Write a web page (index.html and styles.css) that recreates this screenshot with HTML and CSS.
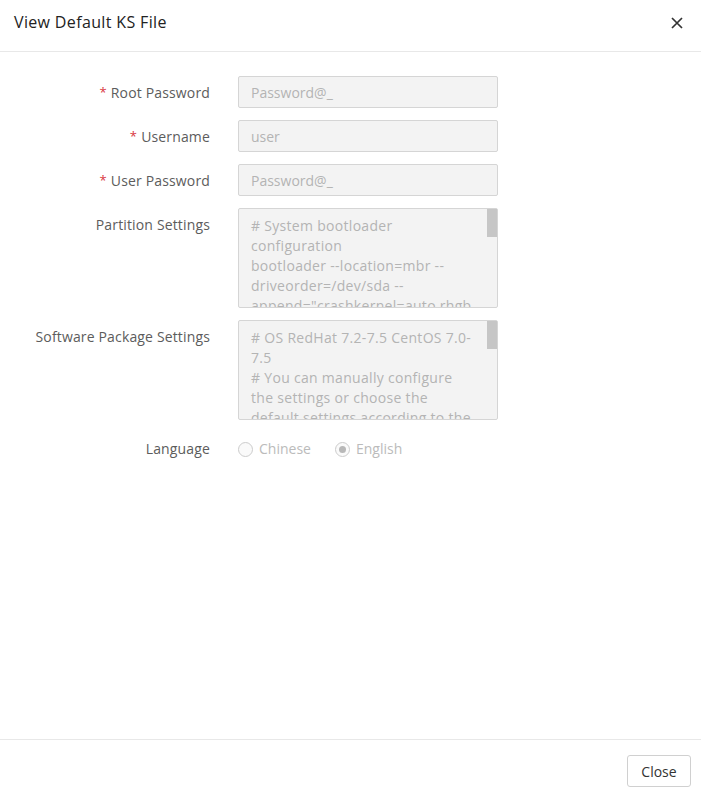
FILE: index.html
```html
<!DOCTYPE html>
<html lang="en">
<head>
  <meta charset="UTF-8" />
  <title>View Default KS File</title>
  <link rel="stylesheet" href="styles.css">
</head>
<body>
  <div class="dialog">
    <div class="dialog-header">
      <span class="dialog-title">View Default KS File</span>
      <svg class="dialog-close" width="12" height="12" viewBox="0 0 12 12">
        <path d="M1 1L11 11M11 1L1 11" stroke="#333" stroke-width="1.7" fill="none"/>
      </svg>
    </div>

    <div class="dialog-body">
      <div class="form-row">
        <label class="form-label"><span class="req">*</span>Root Password</label>
        <input class="form-input" type="text" value="Password@_" disabled>
      </div>
      <div class="form-row">
        <label class="form-label"><span class="req">*</span>Username</label>
        <input class="form-input" type="text" value="user" disabled>
      </div>
      <div class="form-row">
        <label class="form-label"><span class="req">*</span>User Password</label>
        <input class="form-input" type="text" value="Password@_" disabled>
      </div>
      <div class="form-row">
        <label class="form-label">Partition Settings</label>
        <div class="text-box">
          <textarea class="form-text" disabled># System bootloader configuration
bootloader --location=mbr --driveorder=/dev/sda --append="crashkernel=auto rhgb quiet"
# Clear the Master Boot Record
zerombr
# Partition clearing information
clearpart --all --initlabel
# Disk partitioning information
part /boot --fstype="xfs" --size=1024
part swap --fstype="swap" --size=4096
part / --fstype="xfs" --grow --size=1</textarea>
        </div>
      </div>
      <div class="form-row">
        <label class="form-label">Software Package Settings</label>
        <div class="text-box">
          <textarea class="form-text" disabled># OS RedHat 7.2-7.5 CentOS 7.0-&#8203;7.5
# You can manually configure the settings or choose the default settings according to the requirements.
%packages
@^minimal
@core
kexec-tools
%end</textarea>
        </div>
      </div>
      <div class="form-row">
        <label class="form-label">Language</label>
        <div class="radio-group">
          <span class="radio"><span class="radio-dot"></span>Chinese</span>
          <span class="radio checked"><span class="radio-dot"></span>English</span>
        </div>
      </div>
    </div>

    <div class="dialog-footer">
      <button class="btn">Close</button>
    </div>
  </div>
</body>
</html>
```

FILE: styles.css
```css
* { box-sizing: border-box; margin: 0; padding: 0; }
body {
  background: #fff;
  color: #555;
  font-family: 'Open Sans', 'Noto Sans', sans-serif;
  font-size: 14px;
}
.dialog {
  width: 701px;
  height: 797px;
  display: flex;
  flex-direction: column;
}
.dialog-header {
  height: 52px;
  border-bottom: 1px solid #e8e8e8;
  display: flex;
  justify-content: space-between;
  align-items: center;
  padding: 0 18px 8px 14px;
}
.dialog-title {
  font-size: 16px;
  color: #222;
  letter-spacing: 0.35px;
}
.dialog-close {
  cursor: pointer;
  margin-top: 2px;
}
.dialog-body {
  flex: 1;
  padding-top: 24px;
  display: flex;
  flex-direction: column;
  gap: 12px;
}
.form-row {
  display: flex;
  align-items: flex-start;
  gap: 28px;
}
.form-label {
  width: 210px;
  height: 32px;
  text-align: right;
  line-height: 30px;
  padding-top: 2px;
  color: #5c5c5c;
  letter-spacing: 0.15px;
  flex-shrink: 0;
}
.req {
  color: #d9363e;
  margin-right: 4px;
  font-size: 13px;
  position: relative;
  top: -1px;
}
.form-input {
  width: 260px;
  height: 32px;
  border: 1px solid #d5d5d5;
  border-radius: 2px;
  background: #f3f3f3;
  padding: 0 12px;
  font: inherit;
  color: #b4b4b4;
}
.text-box {
  position: relative;
  width: 260px;
  height: 100px;
}
.text-box::after {
  content: "";
  position: absolute;
  top: 1px;
  right: 1px;
  width: 10px;
  height: 28px;
  background: #c6c6c6;
}
.form-text {
  display: block;
  width: 100%;
  height: 100%;
  border: 1px solid #d5d5d5;
  border-radius: 2px;
  background: #f3f3f3;
  padding: 7px 22px 6px 12px;
  font: inherit;
  line-height: 20px;
  letter-spacing: 0.3px;
  color: #b4b4b4;
  resize: none;
  overflow: hidden;
}
.radio-group {
  display: flex;
  gap: 24px;
  height: 32px;
  line-height: 30px;
  padding-top: 2px;
  color: #bbb;
}
.radio {
  display: flex;
  align-items: center;
  gap: 6px;
}
.radio-dot {
  width: 15px;
  height: 15px;
  border: 1px solid #ccc;
  border-radius: 50%;
  background: #fafafa;
  display: flex;
  align-items: center;
  justify-content: center;
}
.radio.checked .radio-dot::after {
  content: "";
  width: 7px;
  height: 7px;
  border-radius: 50%;
  background: #b8b8b8;
}
.dialog-footer {
  border-top: 1px solid #e8e8e8;
  height: 58px;
  display: flex;
  justify-content: flex-end;
  align-items: flex-start;
  padding: 15px 10px 0;
}
.btn {
  width: 64px;
  height: 32px;
  border: 1px solid #d0d0d0;
  border-radius: 3px;
  background: #fff;
  font: inherit;
  color: #333;
}
```
